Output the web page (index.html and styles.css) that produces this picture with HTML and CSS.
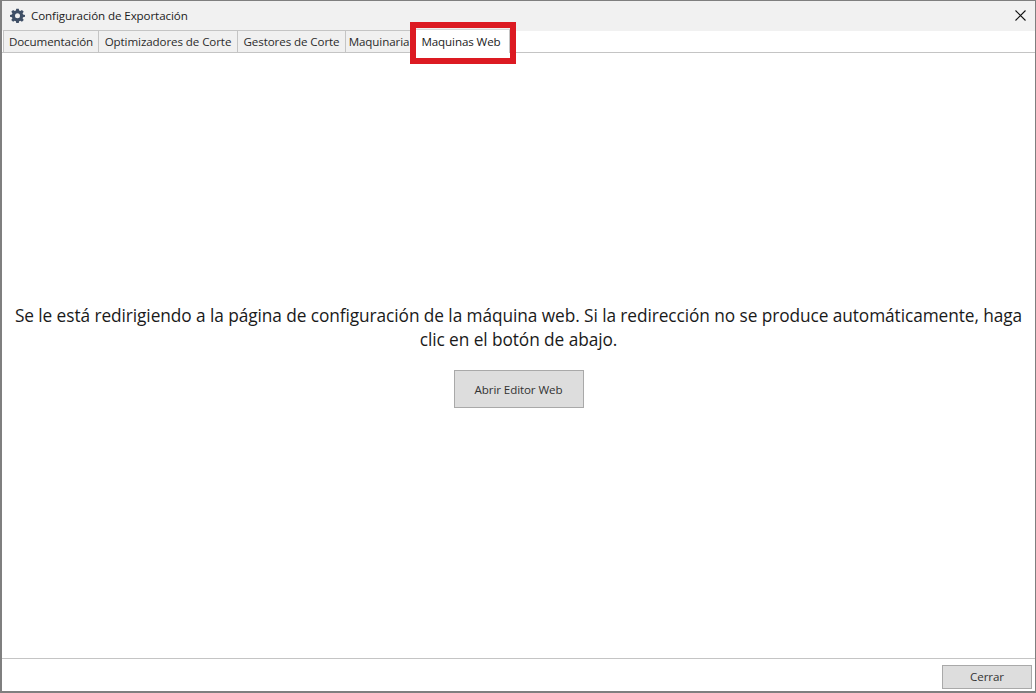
FILE: index.html
```html
<!DOCTYPE html>
<html lang="es">
<head>
<meta charset="utf-8">
<title>Configuración de Exportación</title>
<link rel="stylesheet" href="styles.css">
</head>
<body>
<div class="window">
  <header class="titlebar">
    <svg class="gear" viewBox="0 0 24 24" width="15" height="15" aria-hidden="true">
      <path fill="#3f4f66" fill-rule="evenodd" d="M10 1h4l.6 3.1 1.900.8L19.100 3 22 5.900l-1.900 2.600.8 1.900L24 11v3l-3.100.6-.8 1.900 1.900 2.600L19.100 22l-2.600-1.800-1.900.8L14 24h-4l-.6-3-1.900-.8L4.900 22 2 19.100l1.900-2.600-.8-1.900L0 14v-3l3.100-.6.8-1.900L2 5.900 4.900 3l2.600 1.900 1.900-.8zM12 8.500a4 4 0 1 0 0 8 4 4 0 0 0 0-8z"/>
    </svg>
    <span class="title">Configuración de Exportación</span>
    <svg class="close" viewBox="0 0 11 11" width="11" height="11" aria-hidden="true">
      <path d="M.5.5l10 10M10.500.5l-10 10" stroke="#111" stroke-width="1.100" fill="none"/>
    </svg>
  </header>
  <nav class="tabs">
    <span class="tab tab-doc">Documentación</span>
    <span class="tab tab-opt">Optimizadores de Corte</span>
    <span class="tab tab-ges">Gestores de Corte</span>
    <span class="tab tab-maq">Maquinaria</span>
    <span class="tab tab-active">Maquinas Web</span>
  </nav>
  <main class="content">
    <p class="message">Se le está redirigiendo a la página de configuración de la máquina web. Si la redirección no se produce automáticamente, haga clic en el botón de abajo.</p>
    <button class="btn btn-open" type="button">Abrir Editor Web</button>
  </main>
  <footer class="footer">
    <button class="btn btn-close" type="button">Cerrar</button>
  </footer>
  <div class="highlight"></div>
</div>
</body>
</html>
```
FILE: styles.css
```css
* { box-sizing: border-box; }
html, body { margin: 0; height: 100%; }
body {
  width: 1036px;
  height: 693px;
  overflow: hidden;
  background: #fff;
  font-family: "Open Sans", "Noto Sans", sans-serif;
  color: #1c1c1c;
}
.window {
  position: relative;
  width: 1036px;
  height: 693px;
  display: flex;
  flex-direction: column;
  border-style: solid;
  border-color: #7f7f7f;
  border-width: 1px 1px 2px 2px;
  background: #fff;
}
.titlebar {
  height: 29px;
  flex: none;
  display: flex;
  align-items: center;
  padding: 0 9px 0 8px;
  background: #f1f1f1;
}
.gear { margin-right: 6px; flex: none; margin-top: -1px; }
.title { font-size: 11.600px; letter-spacing: -.1px; }
.close { margin-left: auto; }
.tabs {
  height: 23px;
  flex: none;
  display: flex;
  align-items: stretch;
  padding-left: 1px;
  background: linear-gradient(#f1f1f1 0, #f1f1f1 1px, #fff 1px);
  border-bottom: 1px solid #c4c4c4;
}
.tab {
  display: flex;
  align-items: center;
  justify-content: center;
  font-size: 11.600px;
  letter-spacing: -.1px;
  color: #2b2b2b;
  background: #f0f0f0;
  border: 1px solid #c4c4c4;
  border-bottom: 0;
  border-left: 0;
  white-space: nowrap;
}
.tab-doc { width: 96px; border-left: 1px solid #c4c4c4; }
.tab-opt { width: 139px; }
.tab-ges { width: 108px; }
.tab-maq { width: 67px; }
.tab-active {
  width: 97px;
  height: 24px;
  margin-top: -1px;
  padding-bottom: 1px;
  background: #fff;
  color: #1c1c1c;
  border-top: 1px solid #d8d8d8;
  z-index: 1;
}
.content {
  flex: 1;
  display: flex;
  flex-direction: column;
  align-items: center;
  justify-content: center;
  padding: 0 5px;
  border-bottom: 1px solid #c4c4c4;
}
.message {
  margin: 1px 0 18px;
  font-size: 17.300px;
  line-height: 24px;
  letter-spacing: -.08px;
  text-align: center;
  color: #1a1a1a;
}
.btn {
  font-family: inherit;
  font-size: 11.600px;
  letter-spacing: -.1px;
  color: #333;
  background: #dddddd;
  border: 1px solid #a9a9a9;
  padding: 0;
}
.btn-open { width: 130px; height: 38px; }
.footer {
  height: 32px;
  flex: none;
  display: flex;
  justify-content: flex-end;
  align-items: flex-start;
  padding: 6px 3px 0 0;
}
.btn-close { width: 90px; height: 24px; padding-bottom: 1px; }
.highlight {
  position: absolute;
  left: 408px;
  top: 21px;
  width: 106px;
  height: 42px;
  border: 6px solid #dc1a22;
  pointer-events: none;
  z-index: 2;
}
```
